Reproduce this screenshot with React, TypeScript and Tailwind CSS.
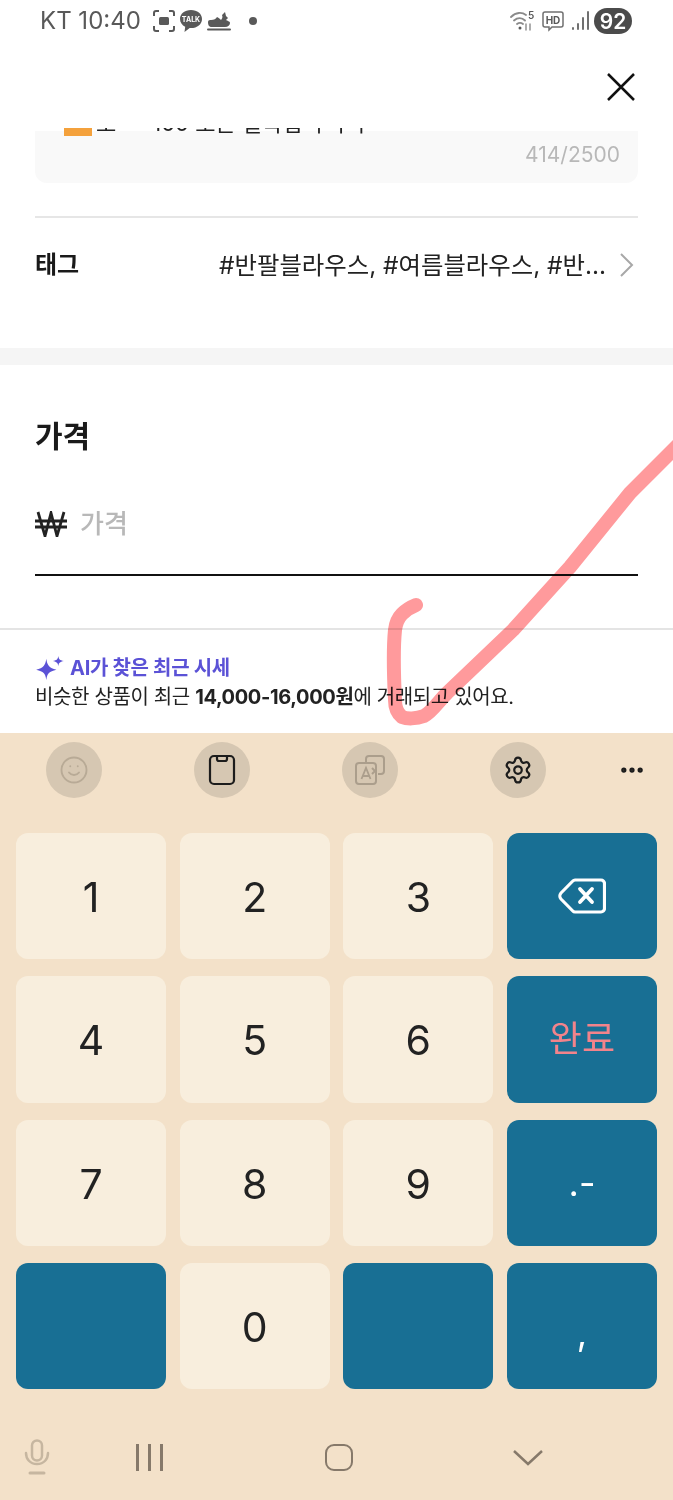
import { MoreHorizontal, Settings, Smile } from "lucide-react";

const kr = "font-['Inter','Noto_Sans_CJK_KR',sans-serif]";

const Key = ({ label }: { label: string }) => (
    <div className="flex items-center justify-center rounded-xl bg-[#f8eedd] pt-[3px] text-[41px] leading-none text-[#222222]">
        {label}
    </div>
);

const BlueKey = ({ children }: { children?: React.ReactNode }) => (
    <div className="flex items-center justify-center rounded-xl bg-[#186f94]">{children}</div>
);

const ToolButton = ({ children }: { children: React.ReactNode }) => (
    <div className="flex h-14 w-14 items-center justify-center rounded-full bg-[#d6c7b2]">{children}</div>
);

const StatusBar = () => (
    <div className="flex h-[42px] items-center pl-10 pr-[41px] text-[#595959]">
        <span className="text-[24px] leading-none">KT 10:40</span>
        <svg viewBox="0 0 24 24" className="ml-[11px] h-6 w-6" fill="none" stroke="#595959" strokeWidth="2">
            <path d="M2 7V4a2 2 0 0 1 2-2h3M17 2h3a2 2 0 0 1 2 2v3M22 17v3a2 2 0 0 1-2 2h-3M7 22H4a2 2 0 0 1-2-2v-3" />
            <rect x="7" y="8" width="10" height="8" rx="1.500" fill="#595959" stroke="none" />
        </svg>
        <svg viewBox="0 0 24 24" className="ml-[3px] h-6 w-6">
            <path d="M12 1C5.700 1 1 4.800 1 10c0 3.400 2.100 6.200 5.200 7.800L5.500 23l5.200-4c.4 0 .9.1 1.300.1 6.300 0 11-3.900 11-9.100S18.300 1 12 1z" fill="#595959" />
            <text x="12" y="13" textAnchor="middle" fontSize="7" fontWeight="700" fill="#ffffff" fontFamily="Inter">TALK</text>
        </svg>
        <svg viewBox="0 0 24 20" className="ml-1 h-5 w-6" fill="#595959">
            <path d="M1 11c0-2 2-2 3-2 3 0 5-1 6-3 2 1 3 2 4 3 1-1 2-3 1-5l3-3 1 4 2 2-2 2c1 1 4 1 4 3 0 2-2 4-5 4H5c-3 0-4-2-4-5z" />
            <rect x="0" y="17.500" width="24" height="2" rx="1" />
        </svg>
        <span className="ml-[18px] h-2 w-2 rounded-full bg-[#595959]" />
        <svg viewBox="0 0 26 24" className="ml-auto h-6 w-[26px]" fill="none" stroke="#8a8a8a" strokeWidth="1.800" strokeLinecap="round">
            <path d="M1 8c5-5 11-5 15-2M4 11.500c3.500-3 8-3 11 0M7 15c2-1.500 4-1.500 6 0" />
            <circle cx="10" cy="19" r="1.500" fill="#595959" stroke="none" />
            <path d="M16 15v6M20 21v-6" strokeWidth="1.400" />
            <text x="18" y="10" fontSize="10" fontWeight="600" fill="#595959" stroke="none" fontFamily="Inter">5</text>
        </svg>
        <svg viewBox="0 0 24 24" className="ml-[5px] h-6 w-6" fill="none" stroke="#707070" strokeWidth="1.500">
            <path d="M4 3h16a2 2 0 0 1 2 2v11a2 2 0 0 1-2 2H11l-3 3v-3H4a2 2 0 0 1-2-2V5a2 2 0 0 1 2-2z" />
            <text x="12" y="14.500" textAnchor="middle" fontSize="10" fontWeight="700" fill="#595959" stroke="none" fontFamily="Inter">HD</text>
        </svg>
        <svg viewBox="0 0 18 22" className="ml-[7px] h-[22px] w-[18px]" fill="#707070">
            <rect x="0" y="17" width="2" height="3" rx="1" />
            <rect x="5" y="13" width="2" height="7" rx="1" />
            <rect x="10" y="7" width="2" height="13" rx="1" />
            <rect x="15" y="1" width="2" height="19" rx="1" />
        </svg>
        <div className="ml-1 flex h-[26px] w-[38px] items-center justify-center rounded-[13px] bg-[#4b4b4b] text-[21px] font-semibold leading-none text-white">
            92
        </div>
    </div>
);

export default function App() {
    return (
        <div className={`relative flex h-[1500px] w-[673px] flex-col overflow-hidden bg-white ${kr}`}>
            <StatusBar />

            <div className="flex h-[86px] items-center justify-end pr-[37px] pt-[4px]">
                <svg viewBox="0 0 30 30" className="h-[30px] w-[30px]" fill="none" stroke="#111111" strokeWidth="2.500">
                    <path d="M2 2l26 26M28 2L2 28" />
                </svg>
            </div>

            <div className="h-[220px] overflow-hidden">
                <div className="mx-[35px] mt-[3px] flex h-[52px] flex-col rounded-b-xl bg-[#f9f9f9]">
                    <div className="-mt-[3px] flex h-[8px] items-end overflow-hidden pl-[29px]">
                        <span className="h-8 w-7 shrink-0 bg-[#f4a13c]" />
                        <span className="mb-[2px] ml-1 text-[22px] leading-none text-[#222222]">오</span>
                        <span className="mb-[2px] ml-[36px] whitespace-nowrap text-[22px] leading-none text-[#222222]">
                            100 모든 실측입니 ㅓㅓ
                        </span>
                    </div>
                    <p className="pr-[18px] pt-[8px] text-right text-[21px] leading-none text-[#b8b8b8]">414/2500</p>
                </div>
                <div className="mx-[35px] mt-[33px] h-[2px] bg-[#e6e6e6]" />
                <div className="ml-[35px] mr-[39px] mt-[29px] flex items-center justify-between">
                    <span className="text-[24px] font-bold leading-9 text-[#1a1a1a]">태그</span>
                    <div className="flex items-center gap-[14px]">
                        <span className="text-[24.400px] leading-9 text-[#222222]">#반팔블라우스, #여름블라우스, #반...</span>
                        <svg viewBox="0 0 14 24" className="h-6 w-[14px]" fill="none" stroke="#a8a8a8" strokeWidth="2">
                            <path d="M1 1l11 11L1 23" />
                        </svg>
                    </div>
                </div>
            </div>

            <div className="h-[17px] bg-[#f5f5f5]" />

            <div className="px-[35px] pt-[50px]">
                <h2 className="text-[30px] font-bold leading-[42px] text-[#1a1a1a]">가격</h2>
                <div className="mt-[48px] flex h-[71px] items-center border-b-2 border-[#111111] pb-[31px]">
                    <svg viewBox="0 0 32 26" className="h-[26px] w-8" fill="none" stroke="#222222" strokeWidth="2.800">
                        <path d="M3 1l7 24 6-23 6 23 7-24M0 10h32M0 16h32" />
                    </svg>
                    <span className="ml-[13px] text-[26px] font-medium leading-none text-[#b8b8b8]">가격</span>
                </div>
            </div>

            <div className="mt-[52px] h-[2px] bg-[#e4e4e4]" />

            <div className="h-[103px] px-[35px] pt-[24px]">
                <div className="flex items-center gap-[5px]">
                    <svg viewBox="0 0 30 26" className="h-[24px] w-[30px]" fill="#5b52d6">
                        <path d="M11 3c1 7 3 10 11 12-8 2-10 4-11 11-1-7-3-9-11-11 8-2 10-5 11-12z" />
                        <path d="M24 0c.5 3.500 1.500 4.500 6 5.500-4.500 1-5.500 2-6 5.500-.5-3.500-1.500-4.500-6-5.500 4.500-1 5.500-2 6-5.500z" />
                    </svg>
                    <span className="text-[20px] font-bold leading-7 tracking-[-0.300px] text-[#5b52d6]">AI가 찾은 최근 시세</span>
                </div>
                <p className="mt-[1px] text-[20px] leading-7 tracking-[-0.360px] text-[#222222]">
                    비슷한 상품이 최근 <span className="font-bold">14,000-16,000원</span>에 거래되고 있어요.
                </p>
            </div>

            <div className="flex flex-1 flex-col bg-[#f3e1c9]">
                <div className="flex h-[100px] items-center pb-[26px] pl-[46px] pr-[27px]">
                    <div className="flex gap-[92px]">
                        <ToolButton>
                            <Smile className="h-[30px] w-[30px] text-[#b8aa96]" strokeWidth={1.500} />
                        </ToolButton>
                        <ToolButton>
                            <svg viewBox="0 0 28 32" className="h-8 w-7" fill="none" stroke="#1c1c1c" strokeWidth="2.200">
                                <rect x="2" y="2" width="24" height="28" rx="4" />
                                <path d="M9 2v3a2 2 0 0 0 2 2h6a2 2 0 0 0 2-2V2" />
                            </svg>
                        </ToolButton>
                        <ToolButton>
                            <svg viewBox="0 0 32 32" className="h-8 w-8" fill="none" stroke="#ab9e8c" strokeWidth="2">
                                <path d="M12 8V5a3 3 0 0 1 3-3h12a3 3 0 0 1 3 3v12a3 3 0 0 1-3 3h-3M18 14l3 3-3 3" />
                                <rect x="2" y="9" width="20" height="21" rx="3" />
                                <path d="M7.500 25l4.500-11 4.500 11M9 22h6" strokeWidth="1.800" />
                            </svg>
                        </ToolButton>
                        <ToolButton>
                            <Settings className="h-[30px] w-[30px] text-[#1c1c1c]" strokeWidth={1.800} />
                        </ToolButton>
                    </div>
                    <MoreHorizontal className="ml-auto h-7 w-7 text-[#1c1c1c]" strokeWidth={2.500} />
                </div>

                <div className="grid h-[556px] grid-cols-4 grid-rows-4 gap-x-[13.670px] gap-y-[17px] px-4">
                    <Key label="1" />
                    <Key label="2" />
                    <Key label="3" />
                    <BlueKey>
                        <svg viewBox="0 0 48 36" className="h-9 w-12" fill="none" stroke="#ffffff" strokeWidth="3.200" strokeLinejoin="round" strokeLinecap="round">
                            <path d="M17 2h26a3.500 3.500 0 0 1 3.500 3.500v25a3.500 3.500 0 0 1-3.500 3.500H17a3 3 0 0 1-2.200-1L3 21a4.500 4.500 0 0 1 0-6L14.800 3a3 3 0 0 1 2.200-1z" />
                            <path d="M22 11l12 13M34 11L22 24" strokeWidth="3.800" />
                        </svg>
                    </BlueKey>
                    <Key label="4" />
                    <Key label="5" />
                    <Key label="6" />
                    <BlueKey>
                        <span className="text-[36px] leading-none text-[#f2838b]">완료</span>
                    </BlueKey>
                    <Key label="7" />
                    <Key label="8" />
                    <Key label="9" />
                    <BlueKey>
                        <span className="text-[36px] leading-none text-white">.-</span>
                    </BlueKey>
                    <BlueKey />
                    <Key label="0" />
                    <BlueKey />
                    <BlueKey>
                        <span className="pt-[14px] text-[36px] leading-none text-white">,</span>
                    </BlueKey>
                </div>

                <div className="flex flex-1 items-center pt-[25px]">
                    <svg viewBox="0 0 26 36" className="ml-6 h-9 w-[26px]" fill="none" stroke="#c6b6a0" strokeWidth="2.500" strokeLinecap="round">
                        <rect x="8" y="1.500" width="10" height="20" rx="5" />
                        <path d="M2 14c0 6 4 11 11 11s11-5 11-11" />
                        <path d="M6 34h14" strokeWidth="3" />
                    </svg>
                    <div className="ml-[86px] flex h-[27px] gap-[9.500px]">
                        <span className="w-[2.500px] bg-[#86796a]" />
                        <span className="w-[2.500px] bg-[#86796a]" />
                        <span className="w-[2.500px] bg-[#86796a]" />
                    </div>
                    <div className="ml-[162px] h-[27px] w-7 rounded-[9px] border-[2.500px] border-[#86796a]" />
                    <svg viewBox="0 0 30 17" className="ml-[160px] h-[17px] w-[30px]" fill="none" stroke="#86796a" strokeWidth="2.500">
                        <path d="M1 2l14 13L29 2" />
                    </svg>
                </div>
            </div>

            <svg viewBox="0 0 673 1500" className="pointer-events-none absolute inset-0 h-[1500px] w-[673px] mix-blend-multiply" fill="none">
                <path
                    d="M682 441L630 493L570 567L513 630L447 693C438 702 432 712 424 716C416 719 407 719 402 717C397 713 395 708 395 700C394 680 393 650 395 630C396 622 398 618 402 614C406 610 411 607 416 605"
                    stroke="#ff9a9c"
                    strokeWidth="14"
                    strokeLinecap="round"
                    strokeLinejoin="round"
                />
            </svg>
        </div>
    );
}
